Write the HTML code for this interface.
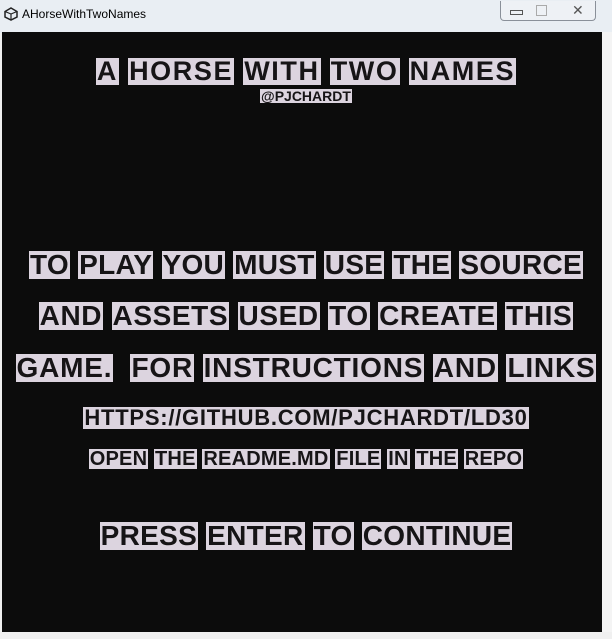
<html><head><style>
body{margin:0;width:612px;height:639px;background:#f0f0f0;position:relative;overflow:hidden;font-family:"Liberation Sans",sans-serif}
.tb{position:absolute;left:0;top:0;width:612px;height:33px;background:#e9eef3}
.game{position:absolute;left:2px;top:32px;width:600px;height:600px;background:#0c0c0c}
.rb{position:absolute;left:602px;top:32px;width:10px;height:600px;background:#f4f4f4}
.l{position:absolute;left:0;width:612px;text-align:center;white-space:nowrap;font-weight:bold;color:#161416}
.l span{background:#dcd4df;padding:0 1px;display:inline-block;line-height:1}
</style></head><body>
<div class="tb"></div>
<svg style="position:absolute;left:4px;top:7px" width="14" height="14" viewBox="0 0 14 14"><path d="M7 1L13 4.5V10L7 13L1 10V4.5Z" fill="none" stroke="#222" stroke-width="1.5"/><path d="M7 7L13 4.5M7 7L1 4.5M7 7V13" stroke="#222" stroke-width="1.2"/></svg>
<div style="position:absolute;left:22px;top:7px;font-size:12px;color:#000">AHorseWithTwoNames</div>
<div style="position:absolute;left:500px;top:1px;width:94px;height:19px;border:1px solid #8a9099;border-top:none;border-radius:0 0 4px 4px;background:#eef1f5"></div>
<div style="position:absolute;left:510px;top:10px;width:11px;height:3px;border:1px solid #555"></div>
<div style="position:absolute;left:536px;top:5px;width:9px;height:9px;border:1px solid #aaa"></div>
<div style="position:absolute;left:572px;top:2px;font-size:14px;color:#555">✕</div>
<div class="game"></div><div class="rb"></div>
<div class="l" style="top:56px;font-size:27px;letter-spacing:1.6px"><span>A</span> <span>HORSE</span> <span>WITH</span> <span>TWO</span> <span>NAMES</span></div>
<div class="l" style="top:89px;font-size:14px"><span>@PJCHARDT</span></div>
<div class="l" style="top:249px;font-size:28px;letter-spacing:0.3px"><span>TO</span> <span>PLAY</span> <span>YOU</span> <span>MUST</span> <span>USE</span> <span>THE</span> <span>SOURCE</span></div>
<div class="l" style="top:300px;font-size:28px;letter-spacing:0.6px"><span>AND</span> <span>ASSETS</span> <span>USED</span> <span>TO</span> <span>CREATE</span> <span>THIS</span></div>
<div class="l" style="top:352px;font-size:28px;letter-spacing:0.8px"><span>GAME.</span>&nbsp; <span>FOR</span> <span>INSTRUCTIONS</span> <span>AND</span> <span>LINKS</span></div>
<div class="l" style="top:407px;font-size:22px;letter-spacing:0.75px"><span>HTTPS://GITHUB.COM/PJCHARDT/LD30</span></div>
<div class="l" style="top:448px;font-size:20px;letter-spacing:0.2px"><span>OPEN</span> <span>THE</span> <span>README.MD</span> <span>FILE</span> <span>IN</span> <span>THE</span> <span>REPO</span></div>
<div class="l" style="top:520px;font-size:28px;letter-spacing:0.3px"><span>PRESS</span> <span>ENTER</span> <span>TO</span> <span>CONTINUE</span></div>
</body></html>
